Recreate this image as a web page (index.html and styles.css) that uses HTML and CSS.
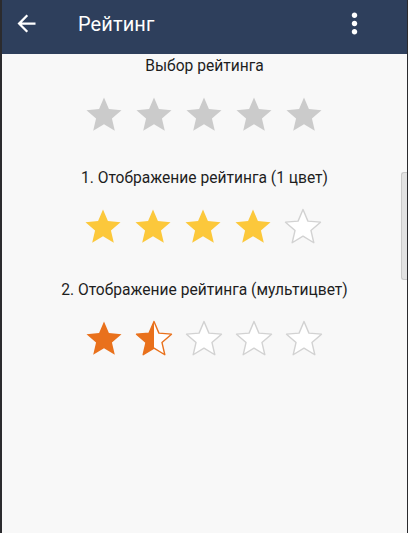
FILE: index.html
```html
<!DOCTYPE html>
<html lang="ru">
<head>
<meta charset="utf-8">
<title>Рейтинг</title>
<link rel="stylesheet" href="styles.css">
</head>
<body>
<div class="frame">
  <svg width="0" height="0" class="defs" aria-hidden="true">
    <defs>
      <linearGradient id="half" x1="0" x2="1" y1="0" y2="0">
        <stop offset="0.5" stop-color="#e9711c"/>
        <stop offset="0.5" stop-color="#ffffff"/>
      </linearGradient>
      <path id="star" d="M12 17.27L18.18 21l-1.64-7.03L22 9.24l-7.19-.61L12 2 9.19 8.63 2 9.24l5.46 4.73L5.82 21z"/>
    </defs>
  </svg>
  <header class="appbar">
    <svg class="back" viewBox="0 0 24 24"><path d="M20 11H7.83l5.59-5.59L12 4l-8 8 8 8 1.41-1.41L7.83 13H20v-2z"/></svg>
    <span class="title">Рейтинг</span>
    <svg class="more" viewBox="0 0 24 24"><path d="M12 8c1.1 0 2-.9 2-2s-.9-2-2-2-2 .9-2 2 .9 2 2 2zm0 2c-1.1 0-2 .9-2 2s.9 2 2 2 2-.9 2-2-.9-2-2-2zm0 6c-1.1 0-2 .9-2 2s.9 2 2 2 2-.9 2-2-.9-2-2-2z"/></svg>
  </header>
  <main class="content">
    <section class="block first">
      <div class="label">Выбор рейтинга</div>
      <div class="stars">
        <svg class="star grey" viewBox="0 0 24 24"><use href="#star"/></svg>
        <svg class="star grey" viewBox="0 0 24 24"><use href="#star"/></svg>
        <svg class="star grey" viewBox="0 0 24 24"><use href="#star"/></svg>
        <svg class="star grey" viewBox="0 0 24 24"><use href="#star"/></svg>
        <svg class="star grey" viewBox="0 0 24 24"><use href="#star"/></svg>
      </div>
    </section>
    <section class="block">
      <div class="label">1. Отображение рейтинга (1 цвет)</div>
      <div class="stars">
        <svg class="star yellow" viewBox="0 0 24 24"><use href="#star"/></svg>
        <svg class="star yellow" viewBox="0 0 24 24"><use href="#star"/></svg>
        <svg class="star yellow" viewBox="0 0 24 24"><use href="#star"/></svg>
        <svg class="star yellow" viewBox="0 0 24 24"><use href="#star"/></svg>
        <svg class="star empty" viewBox="0 0 24 24"><use href="#star"/></svg>
      </div>
    </section>
    <section class="block">
      <div class="label">2. Отображение рейтинга (мультицвет)</div>
      <div class="stars">
        <svg class="star orange" viewBox="0 0 24 24"><use href="#star"/></svg>
        <svg class="star halfstar" viewBox="0 0 24 24"><use href="#star"/></svg>
        <svg class="star empty" viewBox="0 0 24 24"><use href="#star"/></svg>
        <svg class="star empty" viewBox="0 0 24 24"><use href="#star"/></svg>
        <svg class="star empty" viewBox="0 0 24 24"><use href="#star"/></svg>
      </div>
    </section>
  </main>
  <div class="scrollbar"></div>
</div>
</body>
</html>
```

FILE: styles.css
```css
html, body {
  margin: 0;
  padding: 0;
  height: 100%;
  background: #f8f8f8;
}

body {
  font-family: Roboto, "Noto Sans", sans-serif;
  color: #1c1c1c;
}

.defs {
  position: absolute;
  width: 0;
  height: 0;
}

.frame {
  position: relative;
  box-sizing: border-box;
  height: 533px;
  border-left: 2px solid #2b2b2e;
  border-right: 1px solid #2b2b2e;
  background: #f8f8f8;
  overflow: hidden;
}

.appbar {
  height: 54px;
  background: #2e3f5c;
  display: flex;
  align-items: center;
  color: #ffffff;
}

.back {
  width: 27px;
  height: 27px;
  fill: #ffffff;
  margin-left: 11px;
  margin-top: -7px;
}

.title {
  font-size: 20px;
  margin-left: 38px;
  margin-top: -7px;
  letter-spacing: 0.1px;
}

.more {
  width: 33px;
  height: 33px;
  fill: #ffffff;
  margin-left: auto;
  margin-right: 36px;
  margin-top: -7px;
}

.content {
  display: flex;
  flex-direction: column;
  align-items: center;
  padding-top: 3px;
}

.block {
  display: flex;
  flex-direction: column;
  align-items: center;
  margin-top: 33px;
}

.block.first {
  margin-top: 0;
}

.label {
  font-size: 15.6px;
  line-height: 18px;
  color: #1e1e1e;
}

.stars {
  display: flex;
  gap: 8px;
  margin-top: 19px;
  margin-right: 2px;
}

.star {
  width: 42px;
  height: 42px;
  display: block;
}

.star.grey {
  fill: #cbcbcb;
}

.star.yellow {
  fill: #fcc83b;
}

.star.orange {
  fill: #e9711c;
}

.star.halfstar {
  fill: url(#half);
  stroke: #e9711c;
  stroke-width: 0.8;
  stroke-linejoin: round;
}

.star.empty {
  fill: #ffffff;
  stroke: #d2d2d2;
  stroke-width: 0.8;
  stroke-linejoin: round;
}

.scrollbar {
  position: absolute;
  right: 0;
  top: 172px;
  width: 5px;
  height: 106px;
  background: #e2e2e2;
  border: 1px solid #c9c9c9;
  border-right: none;
  border-radius: 3px 0 0 3px;
}
```
